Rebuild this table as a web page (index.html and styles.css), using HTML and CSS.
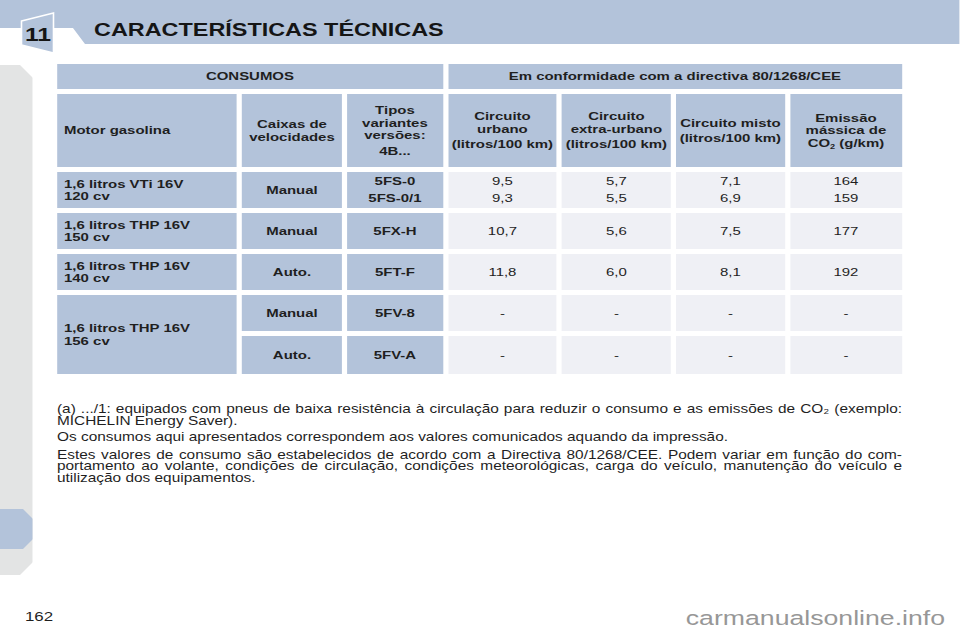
FILE: index.html
```html
<!DOCTYPE html>
<html lang="pt">
<head>
<meta charset="utf-8">
<title>Características técnicas</title>
<link rel="stylesheet" href="styles.css">
</head>
<body>
<div class="stage">
  <header class="top">
    <div class="badge">
      <svg class="badge-shape" viewBox="0 0 36 44" preserveAspectRatio="none"><polygon points="2,10 34,2 34,42 2,34"/></svg>
      <span class="badge-num">11</span>
    </div>
    <h1 class="title">CARACTERÍSTICAS TÉCNICAS</h1>
  </header>
  <div class="content-row">
    <aside class="side"><div class="side-tab"></div></aside>
    <main class="main">
      <div class="spec">
        <div class="c h span3">CONSUMOS</div>
        <div class="c h span4">Em conformidade com a directiva 80/1268/CEE</div>

        <div class="c h left">Motor gasolina</div>
        <div class="c h">Caixas de<br>velocidades</div>
        <div class="c h stack"><span>Tipos<br>variantes<br>versões:</span><span class="sep">4B...</span></div>
        <div class="c h stack"><span>Circuito<br>urbano</span><span class="sep">(litros/100 km)</span></div>
        <div class="c h stack"><span>Circuito<br>extra-urbano</span><span class="sep">(litros/100 km)</span></div>
        <div class="c h stack"><span>Circuito misto</span><span class="sep">(litros/100 km)</span></div>
        <div class="c h"><span>Emissão<br>mássica de<br>CO<sub>2</sub> (g/km)</span></div>

        <div class="c h left">1,6 litros VTi 16V<br>120 cv</div>
        <div class="c h">Manual</div>
        <div class="c h tall">5FS-0<br>5FS-0/1</div>
        <div class="c v tall">9,5<br>9,3</div>
        <div class="c v tall">5,7<br>5,5</div>
        <div class="c v tall">7,1<br>6,9</div>
        <div class="c v tall">164<br>159</div>

        <div class="c h left">1,6 litros THP 16V<br>150 cv</div>
        <div class="c h">Manual</div>
        <div class="c h">5FX-H</div>
        <div class="c v">10,7</div>
        <div class="c v">5,6</div>
        <div class="c v">7,5</div>
        <div class="c v">177</div>

        <div class="c h left">1,6 litros THP 16V<br>140 cv</div>
        <div class="c h">Auto.</div>
        <div class="c h">5FT-F</div>
        <div class="c v">11,8</div>
        <div class="c v">6,0</div>
        <div class="c v">8,1</div>
        <div class="c v">192</div>

        <div class="c h left rows2">1,6 litros THP 16V<br>156 cv</div>
        <div class="c h">Manual</div>
        <div class="c h">5FV-8</div>
        <div class="c v">-</div>
        <div class="c v">-</div>
        <div class="c v">-</div>
        <div class="c v">-</div>

        <div class="c h">Auto.</div>
        <div class="c h">5FV-A</div>
        <div class="c v">-</div>
        <div class="c v">-</div>
        <div class="c v">-</div>
        <div class="c v">-</div>
      </div>

      <div class="notes">
        <p class="p1">(a) .../1: equipados com pneus de baixa resistência à circulação para reduzir o consumo e as emissões de CO₂ (exemplo: MICHELIN Energy Saver).</p>
        <p class="p2">Os consumos aqui apresentados correspondem aos valores comunicados aquando da impressão.</p>
        <p class="p3">Estes valores de consumo são estabelecidos de acordo com a Directiva 80/1268/CEE. Podem variar em função do com-portamento ao volante, condições de circulação, condições meteorológicas, carga do veículo, manutenção do veículo e utilização dos equipamentos.</p>
      </div>
    </main>
  </div>
  <footer class="foot">
    <span class="page-no">162</span>
    <span class="mark">carmanualsonline.info</span>
  </footer>
</div>
</body>
</html>
```

FILE: styles.css
```css
html, body {
  margin: 0;
  padding: 0;
  background: #ffffff;
}

body {
  width: 960px;
  height: 640px;
  overflow: hidden;
  font-family: "Liberation Sans", Arial, sans-serif;
  color: #1f1f1f;
}

/* the printed page is horizontally stretched; reproduce it with one scale */
.stage {
  width: 738.46px;
  height: 640px;
  transform: scaleX(1.3);
  transform-origin: 0 0;
}

/* ---------- header band ---------- */
.top {
  position: relative;
  height: 44px;
  padding-left: 72.3px;
  box-sizing: border-box;
}

.top::before {
  content: "";
  position: absolute;
  inset: 0;
  background: #b3c3da;
  clip-path: polygon(0 0, 100% 0, 100% 44px, 65.38px 44px, 56.15px 28px, 0 28px);
}

.badge {
  position: absolute;
  left: 15.38px;
  top: 11px;
  width: 27.69px;
  height: 44px;
  display: flex;
  justify-content: center;
  z-index: 2;
}

.badge-shape {
  position: absolute;
  inset: 0;
  width: 100%;
  height: 100%;
}

.badge-shape polygon {
  fill: #b3c3da;
  stroke: #ffffff;
  stroke-width: 1.6;
}

.badge-num {
  position: relative;
  margin-top: 14px;
  font-size: 19px;
  line-height: 19px;
  font-weight: bold;
  color: #151515;
}

.title {
  position: relative;
  margin: 0;
  padding-top: 21px;
  font-size: 18px;
  line-height: 18px;
  font-weight: bold;
  color: #151515;
  white-space: nowrap;
}

/* ---------- body ---------- */
.content-row {
  display: flex;
  align-items: flex-start;
  margin-top: 20px;
}

.side {
  flex: none;
  width: 25.38px;
  height: 510px;
  margin-top: 1px;
  background: #e3e4e4;
  clip-path: polygon(0 0, 15.38px 0, 100% 13px, 100% 497px, 15.38px 100%, 0 100%);
  display: flex;
  flex-direction: column;
}

.side-tab {
  margin-top: 444px;
  height: 40px;
  background: #b3c3da;
  clip-path: polygon(0 0, 17.69px 0, 100% 10px, 100% 30px, 17.69px 100%, 0 100%);
}

.main {
  margin-left: 18.46px;
  width: 650px;
}

/* ---------- table ---------- */
.spec {
  display: grid;
  grid-template-columns: 138.46px 76.92px 73.85px 83.85px 83.85px 83.85px 86.15px;
  grid-template-rows: 25px 73px 36px 36px 36px 36px 38px;
  column-gap: 3.846px;
  row-gap: 5px;
}

.c {
  display: flex;
  align-items: center;
  justify-content: center;
  text-align: center;
  font-size: 11.5px;
  line-height: 12.5px;
}

.h {
  background: #b3c3da;
  font-weight: bold;
}

.v {
  background: #eff0f5;
  font-weight: normal;
}

.tall {
  line-height: 16.6px;
}

.left {
  justify-content: flex-start;
  text-align: left;
  padding-left: 5.4px;
}

.span3 { grid-column: span 3; }
.span4 { grid-column: span 4; }
.rows2 { grid-row: span 2; }

.stack {
  flex-direction: column;
}

.stack .sep {
  margin-top: 3px;
}

sub {
  font-size: 7px;
  line-height: 0;
  vertical-align: -2px;
}

/* ---------- notes ---------- */
.notes {
  margin-top: 30px;
  font-size: 11.85px;
  line-height: 11.5px;
}

.notes p {
  margin: 0;
  text-align: justify;
}

.notes .p1 {
  margin-bottom: 4.5px;
}

.notes .p2 {
  margin-bottom: 6.5px;
}

/* ---------- footer ---------- */
.foot {
  display: flex;
  justify-content: space-between;
  align-items: flex-start;
  margin-top: 32px;
  padding: 0 11.5px 0 19.2px;
}

.page-no {
  margin-top: 3px;
  font-size: 13px;
  line-height: 14px;
  color: #1f1f1f;
}

.mark {
  font-size: 20.5px;
  line-height: 21px;
  color: #979797;
}
```
